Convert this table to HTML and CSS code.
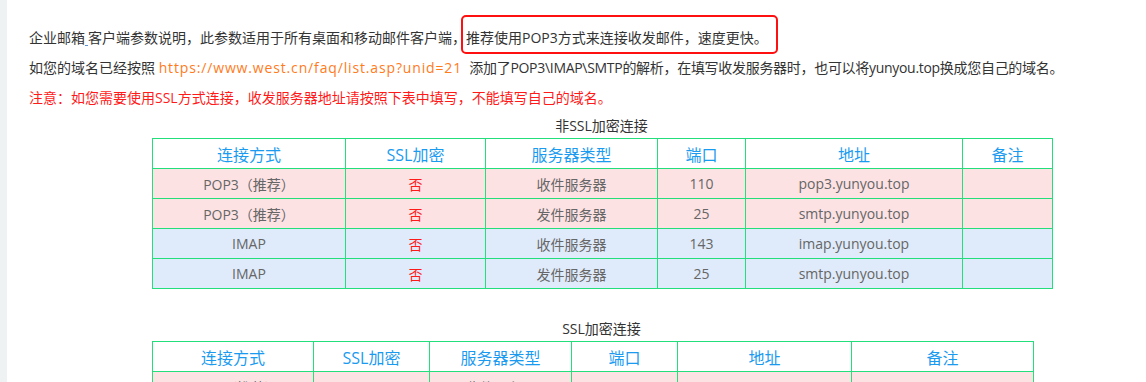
FILE: index.html
```html
<!DOCTYPE html>
<html lang="zh-CN">
<head>
<meta charset="utf-8">
<title>企业邮箱客户端参数说明</title>
<link rel="stylesheet" href="styles.css">
</head>
<body>
<div class="page">
  <div class="rail"></div>
  <div class="main">
    <p class="line">企业邮箱<a class="gap">&nbsp;</a>客户端参数说明，此参数适用于所有桌面和移动邮件客户端，<span class="hl">推荐使用POP3方式来连接收发邮件，速度更快。</span></p>
    <p class="line">如您的域名已经按照 <a class="link">https://www.west.cn/faq/list.asp?unid=21</a>&nbsp; <span class="tight">添加了POP3\IMAP\SMTP的解析，在填写收发服务器时，也可以将yunyou.top换成您自己的域名。</span></p>
    <p class="line warn">注意：如您需要使用SSL方式连接，收发服务器地址请按照下表中填写，不能填写自己的域名。</p>

    <div class="tables">
      <div class="caption">非SSL加密连接</div>
      <table class="grid t1">
        <colgroup><col><col><col><col><col><col></colgroup>
        <tr class="head"><th>连接方式</th><th>SSL加密</th><th>服务器类型</th><th>端口</th><th>地址</th><th>备注</th></tr>
        <tr class="pink"><td>POP3（推荐）</td><td class="no">否</td><td>收件服务器</td><td>110</td><td>pop3.yunyou.top</td><td></td></tr>
        <tr class="pink"><td>POP3（推荐）</td><td class="no">否</td><td>发件服务器</td><td>25</td><td>smtp.yunyou.top</td><td></td></tr>
        <tr class="blue"><td>IMAP</td><td class="no">否</td><td>收件服务器</td><td>143</td><td>imap.yunyou.top</td><td></td></tr>
        <tr class="blue"><td>IMAP</td><td class="no">否</td><td>发件服务器</td><td>25</td><td>smtp.yunyou.top</td><td></td></tr>
      </table>

      <div class="caption second">SSL加密连接</div>
      <table class="grid t2">
        <colgroup><col><col><col><col><col><col></colgroup>
        <tr class="head"><th>连接方式</th><th>SSL加密</th><th>服务器类型</th><th>端口</th><th>地址</th><th>备注</th></tr>
        <tr class="pink"><td>POP3（推荐）</td><td class="yes">是</td><td>收件服务器</td><td>995</td><td>pop3.yunyou.top</td><td></td></tr>
        <tr class="pink"><td>POP3（推荐）</td><td class="yes">是</td><td>发件服务器</td><td>465</td><td>smtp.yunyou.top</td><td></td></tr>
        <tr class="blue"><td>IMAP</td><td class="yes">是</td><td>收件服务器</td><td>993</td><td>imap.yunyou.top</td><td></td></tr>
        <tr class="blue"><td>IMAP</td><td class="yes">是</td><td>发件服务器</td><td>465</td><td>smtp.yunyou.top</td><td></td></tr>
      </table>
    </div>
  </div>
</div>
</body>
</html>
```

FILE: styles.css
```css
html, body {
  margin: 0;
  padding: 0;
  background: #ffffff;
}

body {
  font-family: "Open Sans", "Noto Sans CJK SC", sans-serif;
  font-size: 14px;
  color: #333333;
}

.page {
  display: flex;
  min-height: 382px;
}

.rail {
  width: 7px;
  flex: none;
  background: #eef2f3;
}

.main {
  flex: 1;
  padding: 23px 0 40px 22px;
}

.line {
  margin: 0;
  line-height: 30px;
  white-space: nowrap;
}

.gap {
  display: inline-block;
  width: 3px;
  border-bottom: 1px solid #5b8fd6;
  line-height: 14px;
  vertical-align: baseline;
}

.hl {
  position: relative;
}

.hl::after {
  content: "";
  position: absolute;
  left: -5px;
  right: -10px;
  top: -13px;
  bottom: -7px;
  border: 2px solid #ff1010;
  border-radius: 5px;
}

.link {
  color: #ff7b1c;
  text-decoration: none;
  letter-spacing: 0.85px;
}

.tight {
  letter-spacing: -0.3px;
}

.warn {
  color: #ff1a1a;
}

.tables {
  width: 899px;
  margin-left: 123px;
}

.caption {
  text-align: center;
  line-height: 24px;
  margin-top: 1px;
  color: #333333;
}

.caption.second {
  margin-top: 28px;
}

.grid {
  border-collapse: collapse;
  table-layout: fixed;
  border: 1px solid #22df7b;
}

.grid th,
.grid td {
  border: 1px solid #22df7b;
  padding: 0;
  height: 29px;
  text-align: center;
  vertical-align: middle;
  font-weight: normal;
  white-space: nowrap;
}

.grid th {
  color: #1a9bf0;
  font-size: 16px;
  background: #ffffff;
}

.grid td {
  color: #666666;
  font-size: 14px;
}

.pink td { background: #fde2e4; }
.blue td { background: #dfebfa; }

.grid td.no { color: #ff1a1a; }
.grid td.yes { color: #14b84a; }

.t1 { width: 900px; }
.t1 col:nth-child(1) { width: 193px; }
.t1 col:nth-child(2) { width: 140px; }
.t1 col:nth-child(3) { width: 172px; }
.t1 col:nth-child(4) { width: 88px; }
.t1 col:nth-child(5) { width: 217px; }
.t1 col:nth-child(6) { width: 90px; }

.t2 { width: 881px; }
.t2 col:nth-child(1) { width: 161px; }
.t2 col:nth-child(2) { width: 116px; }
.t2 col:nth-child(3) { width: 142px; }
.t2 col:nth-child(4) { width: 106px; }
.t2 col:nth-child(5) { width: 174px; }
.t2 col:nth-child(6) { width: 182px; }
```
